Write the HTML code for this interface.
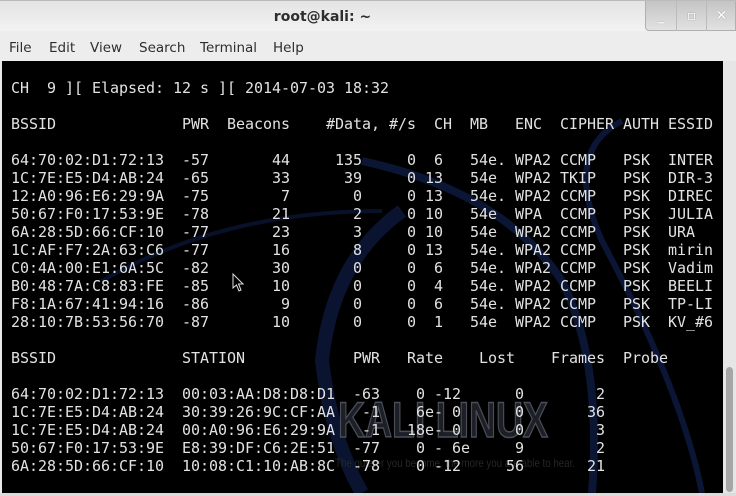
<!DOCTYPE html>
<html><head><meta charset="utf-8"><style>
*{margin:0;padding:0;box-sizing:border-box}
html,body{width:736px;height:496px;overflow:hidden;background:#e8e8e8;font-family:"DejaVu Sans","Liberation Sans",sans-serif}
#title{position:absolute;left:0;top:0;width:736px;height:31px;background:linear-gradient(#e4e4e4,#f2f2f2);border-top:1px solid #bbb;}
#title .t{position:absolute;left:0;width:645px;top:8px;text-align:center;font-size:14px;font-weight:bold;color:#2e2e2e}
#btns{position:absolute;left:645px;top:0;width:91px;height:30px;background:linear-gradient(#c4c4c4,#e2e2e2);border-radius:0 0 0 4px;border:1px solid #b0b0b0;border-top:none}
#btns span{position:absolute;top:0;width:30px;height:30px;text-align:center;color:#fff;font-size:14px;line-height:30px;font-weight:bold;text-shadow:0 0 1px #777}
#menu{position:absolute;left:0;top:31px;width:736px;height:30px;background:#ededed;font-size:13.5px;color:#2e2e2e}
#menu span{position:absolute;top:9px}
#term{position:absolute;left:2px;top:61px;width:721px;height:432px;background:#000;overflow:hidden}
pre{position:absolute;left:0;top:18px;font-family:"DejaVu Sans Mono","Liberation Mono",monospace;font-size:15px;line-height:18px;color:#e2e2e2;white-space:pre;letter-spacing:-0.03px}
#sb{position:absolute;left:723px;top:61px;width:13px;height:432px;background:#e6e6e6}
#thumb{position:absolute;left:726px;top:367px;width:7px;height:125px;background:#a6a6a6;border-radius:4px}
#bot{position:absolute;left:0;top:493px;width:736px;height:3px;background:#dcdcdc}
</style></head><body>
<div id="title"><div class="t">root@kali: ~</div>
<div id="btns"><span style="left:0">_</span><span style="left:30px;border-left:1px solid #bbb">▫</span><span style="left:60px;border-left:1px solid #bbb">✕</span></div></div>
<div id="menu"><span style="left:9px">File</span><span style="left:49px">Edit</span><span style="left:90px">View</span><span style="left:139px">Search</span><span style="left:200px">Terminal</span><span style="left:273px">Help</span></div>
<div id="term">
<svg width="721" height="432" style="position:absolute;left:0;top:0">
<path d="M360 100 Q500 130 560 220 Q600 300 590 432" stroke="#0b1634" stroke-width="8" fill="none"/>
<path d="M400 150 Q330 200 320 300 Q330 380 360 432" stroke="#0a1430" stroke-width="14" fill="none"/>
<path d="M620 60 Q560 90 600 180 Q680 330 700 432" stroke="#0b1535" stroke-width="6" fill="none"/>
<path d="M100 220 Q220 150 380 150" stroke="#08112a" stroke-width="4" fill="none"/>
<text x="336" y="376" textLength="210" lengthAdjust="spacingAndGlyphs" font-family="Liberation Sans,sans-serif" font-weight="bold" font-size="50" fill="#1c1f26" stroke="#4a4e58" stroke-width="1.5">KALI LINUX</text>
<text x="333" y="406" textLength="240" lengthAdjust="spacingAndGlyphs" font-family="Liberation Sans,sans-serif" font-size="12" fill="#262626">The quieter you become, the more you are able to hear.</text>
</svg>
<pre> CH  9 ][ Elapsed: 12 s ][ 2014-07-03 18:32

 BSSID              PWR  Beacons    #Data, #/s  CH  MB   ENC  CIPHER AUTH ESSID

 64:70:02:D1:72:13  -57       44     135     0  6   54e. WPA2 CCMP   PSK  INTER
 1C:7E:E5:D4:AB:24  -65       33      39     0 13   54e  WPA2 TKIP   PSK  DIR-3
 12:A0:96:E6:29:9A  -75        7       0     0 13   54e. WPA2 CCMP   PSK  DIREC
 50:67:F0:17:53:9E  -78       21       2     0 10   54e  WPA  CCMP   PSK  JULIA
 6A:28:5D:66:CF:10  -77       23       3     0 10   54e  WPA2 CCMP   PSK  URA
 1C:AF:F7:2A:63:C6  -77       16       8     0 13   54e. WPA2 CCMP   PSK  mirin
 C0:4A:00:E1:6A:5C  -82       30       0     0  6   54e. WPA2 CCMP   PSK  Vadim
 B0:48:7A:C8:83:FE  -85       10       0     0  4   54e. WPA2 CCMP   PSK  BEELI
 F8:1A:67:41:94:16  -86        9       0     0  6   54e. WPA2 CCMP   PSK  TP-LI
 28:10:7B:53:56:70  -87       10       0     0  1   54e  WPA2 CCMP   PSK  KV_#6

 BSSID              STATION            PWR   Rate    Lost    Frames  Probe

 64:70:02:D1:72:13  00:03:AA:D8:D8:D1  -63    0 -12      0        2
 1C:7E:E5:D4:AB:24  30:39:26:9C:CF:AA   -1    6e- 0      0       36
 1C:7E:E5:D4:AB:24  00:A0:96:E6:29:9A   -1   18e- 0      0        3
 50:67:F0:17:53:9E  E8:39:DF:C6:2E:51  -77    0 - 6e     9        2
 6A:28:5D:66:CF:10  10:08:C1:10:AB:8C  -78    0 -12     56       21</pre>
<svg width="12" height="20" style="position:absolute;left:230px;top:212px"><path d="M1 1 L1 15 L4.5 12 L7 18 L9 17 L6.5 11 L11 11 Z" fill="#000" stroke="#ddd" stroke-width="1"/></svg>
</div>
<div id="sb"></div><div id="thumb"></div><div id="bot"></div>
</body></html>
